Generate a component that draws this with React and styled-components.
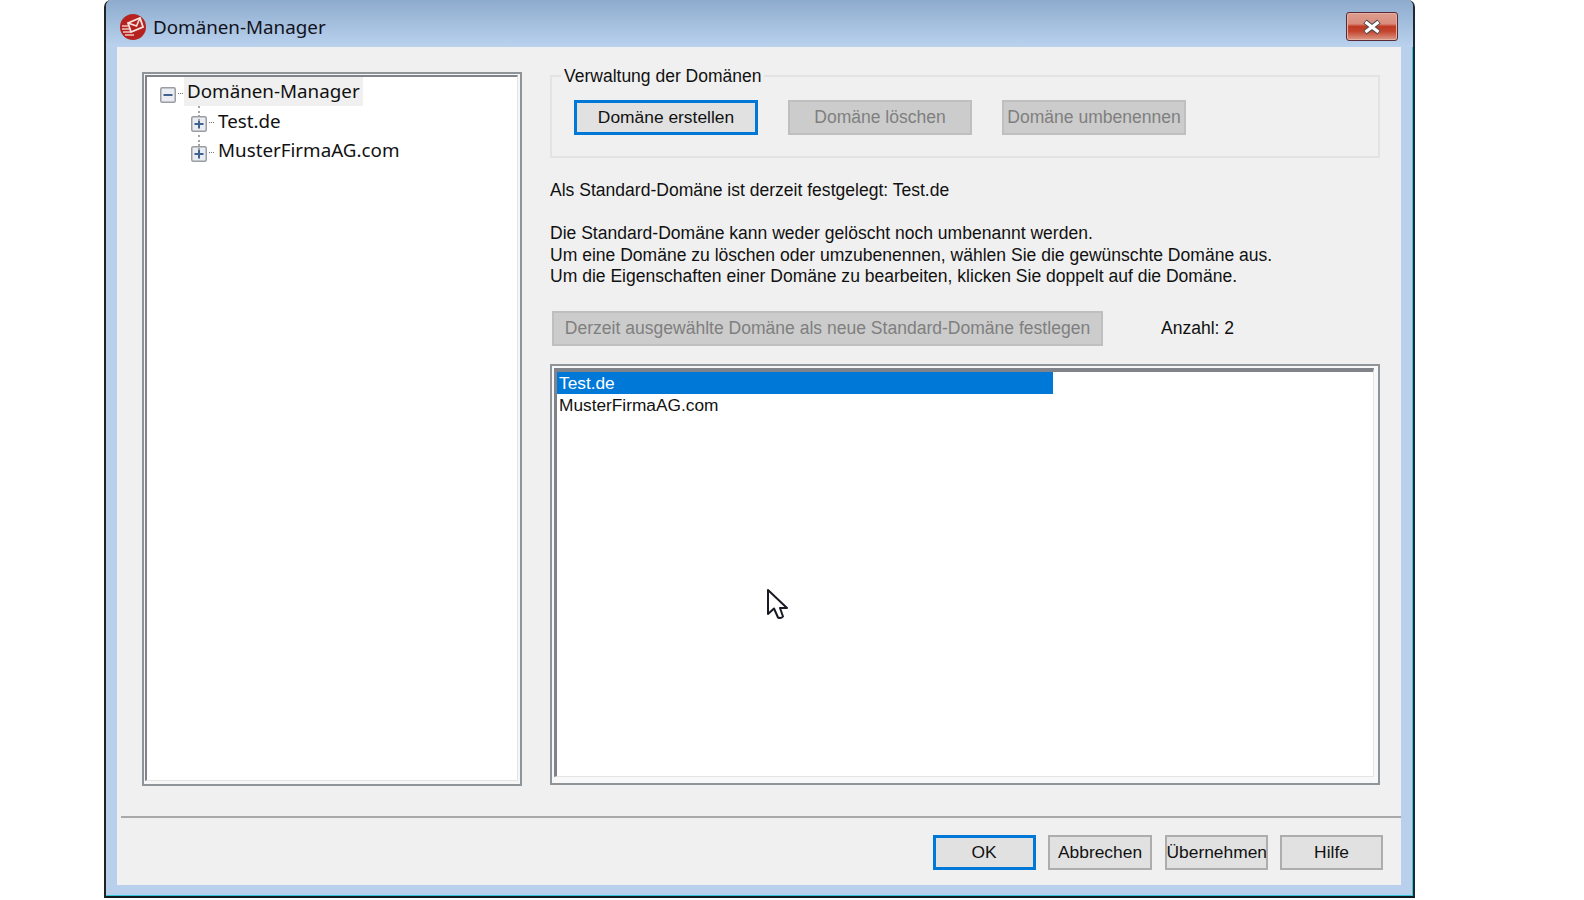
import React from 'react';
import styled, { createGlobalStyle } from 'styled-components';

const GlobalStyle = createGlobalStyle`
  html, body {
    margin: 0;
    padding: 0;
    height: 100%;
    background: #fff;
  }
  body {
    font-family: 'Liberation Sans', Arial, sans-serif;
    font-size: 18px;
    color: #111;
    overflow: hidden;
  }
`;

const Desktop = styled.div`
  position: relative;
  width: 1584px;
  height: 900px;
  padding-left: 104px;
  box-sizing: border-box;
`;

const DialogWindow = styled.div`
  width: 1311px;
  height: 898px;
  box-sizing: border-box;
  display: flex;
  flex-direction: column;
  background: #b8d0ec;
  border-left: 2px solid #222;
  border-right: 2px solid #1d2a30;
  border-bottom: 2px solid #101c22;
  border-radius: 7px 7px 0 0;
  box-shadow: inset -1px -1px 0 #35c4d8;
`;

const TitleBar = styled.div`
  height: 47px;
  box-sizing: border-box;
  flex: none;
  display: flex;
  align-items: center;
  padding: 6px 15px 0 13px;
  border-radius: 6px 6px 0 0;
  background: linear-gradient(#8dabcd, #bad2ee);
`;

const TitleText = styled.span`
  margin-left: 6px;
  font-family: 'Noto Sans', sans-serif;
  font-size: 18.8px;
  color: #12121c;
  flex: 1;
`;

const CloseButton = styled.div`
  width: 52px;
  height: 29px;
  box-sizing: border-box;
  display: flex;
  align-items: center;
  justify-content: center;
  border: 1px solid #5b2a38;
  border-radius: 3px;
  box-shadow: inset 0 0 0 1px #e8b0a0;
  background: linear-gradient(#dd9d8e 0%, #d98c7c 40%, #c03a24 50%, #c4452e 68%, #dc9a8a 100%);
`;

const ClientArea = styled.div`
  flex: 1;
  margin: 0 12px 11px 11px;
  display: flex;
  flex-direction: column;
  background: #f0f0f0;
`;

const Body = styled.div`
  height: 769px;
  box-sizing: border-box;
  display: flex;
  padding: 25px 21px 0 25px;
  gap: 28px;
`;

const TreePanel = styled.div`
  width: 380px;
  height: 714px;
  box-sizing: border-box;
  border: 2px solid #8f9498;
  background: #f6f6f6;
  padding: 1px 2px 3px 1px;
  display: flex;
`;

const TreeInner = styled.div`
  flex: 1;
  box-sizing: border-box;
  background: #fff;
  border-top: 2px solid #80848a;
  border-left: 2px solid #80848a;
  border-right: 1px solid #e4e4e4;
  border-bottom: 1px solid #e4e4e4;
  padding: 0 0 0 13px;
`;

const TreeRow = styled.div`
  position: relative;
  height: 29.5px;
  display: flex;
  align-items: center;
  padding-left: ${p => (p.$child ? '31px' : '0')};
  font-family: 'Noto Sans', sans-serif;
  font-size: 18.8px;
  color: #111;

  ${p => p.$child && `
    &::before {
      content: '';
      position: absolute;
      left: 38px;
      top: -1px;
      height: 15px;
      border-left: 2px dotted #a4a4a4;
    }
  `}
`;

const Connector = styled.span`
  width: 5px;
  margin: 3px 2px 0 2px;
  border-top: 1px dotted #777;
  flex: none;
`;

const TreeLabel = styled.span`
  padding: 2px 3px;
  line-height: 25px;
  margin-left: -1px;
  background: ${p => (p.$active ? '#f0f0f0' : 'transparent')};
`;

const RightColumn = styled.div`
  flex: 1;
  display: flex;
  flex-direction: column;
  min-width: 0;
`;

const GroupBox = styled.fieldset`
  margin: -6px 0 0 0;
  padding: 0;
  height: 92px;
  box-sizing: border-box;
  border: 2px solid #e3e3e3;
  min-inline-size: 0;
`;

const GroupLegend = styled.legend`
  margin-left: 9px;
  padding: 0 3px;
  font-size: 17.5px;
  line-height: 20px;
`;

const ButtonRow = styled.div`
  display: flex;
  gap: 30px;
  padding: 14px 0 0 22px;
`;

const PushButton = styled.button`
  width: ${p => p.$width || '184px'};
  height: ${p => p.$height || '35px'};
  padding: 0;
  box-sizing: border-box;
  flex: none;
  overflow: hidden;
  white-space: nowrap;
  font-family: inherit;
  font-size: ${p => (p.disabled ? '17.55px' : '17.4px')};
  color: ${p => (p.disabled ? '#7f7f7f' : '#111')};
  background: ${p => (p.disabled ? '#cccccc' : '#e1e1e1')};
  border: ${p => (p.$primary ? '3px solid #0078d7' : p.disabled ? '2px solid #bfbfbf' : '2px solid #adadad')};
`;

const InfoLine = styled.div`
  margin-top: 21px;
  font-size: 17.55px;
  line-height: 22px;
`;

const InfoBlock = styled.div`
  margin-top: 22px;
  font-size: 17.55px;
  line-height: 21.5px;
`;

const DefaultRow = styled.div`
  display: flex;
  align-items: center;
  margin-top: 23px;
  padding-left: 2px;
`;

const CountLabel = styled.span`
  margin-left: 58px;
  font-size: 17.55px;
`;

const ListPanel = styled.div`
  margin-top: 18px;
  width: 830px;
  height: 421px;
  box-sizing: border-box;
  border: 2px solid #8f9498;
  background: #f8f8f8;
  padding: 2px 4px 6px 2px;
  display: flex;
`;

const ListInner = styled.div`
  flex: 1;
  box-sizing: border-box;
  background: #fff;
  border-top: 4px solid #80848a;
  border-left: 3px solid #80848a;
  border-right: 1px solid #e4e4e4;
  border-bottom: 1px solid #e4e4e4;
`;

const ListItem = styled.div`
  width: 496px;
  height: 22px;
  padding-left: 2px;
  box-sizing: border-box;
  font-size: 17.3px;
  line-height: 22px;
  color: ${p => (p.$selected ? '#fff' : '#111')};
  background: ${p => (p.$selected ? '#0078d7' : 'transparent')};
`;

const Separator = styled.div`
  height: 2px;
  margin: 0 0 0 4px;
  background: #a9a9a9;
`;

const Footer = styled.div`
  flex: 1;
  display: flex;
  justify-content: flex-end;
  align-items: flex-start;
  gap: 12.5px;
  padding: 17px 18px 0 0;
`;

const CursorIcon = styled.svg`
  position: absolute;
  left: 766px;
  top: 588px;
`;

const AppIcon = () => (
  <svg width="28" height="28" viewBox="0 0 28 28">
    <circle cx="14" cy="14" r="13" fill="#b5221f" />
    <path d="M9 10 L21 5 L24 14 L12 19 Z" fill="none" stroke="#f6e4e0" strokeWidth="1.8" />
    <path d="M9 10 L17.5 13 L21 5" fill="none" stroke="#f6e4e0" strokeWidth="1.6" />
    <path d="M3 13h6M3 16h7M4 19h7M6 22h9" stroke="#f0c8c0" strokeWidth="1.4" />
  </svg>
);

const CloseGlyph = () => (
  <svg width="22" height="16" viewBox="0 0 22 16">
    <path d="M4 2.5 L18 13.5 M18 2.5 L4 13.5" stroke="#4c4a50" strokeWidth="5.4" />
    <path d="M4.5 3 L17.5 13 M17.5 3 L4.5 13" stroke="#fff" strokeWidth="3.2" />
  </svg>
);

const Expander = ({ open }) => (
  <svg width="16" height="16" viewBox="0 0 16 16" style={{ flex: 'none', marginTop: 6 }}>
    <rect x="0.75" y="0.75" width="14.5" height="14.5" rx="1.5" fill="#e9edf2" stroke="#9a9ea3" strokeWidth="1.5" />
    <path d={open ? 'M3.5 8h9' : 'M3.5 8h9M8 3.5v9'} stroke="#41618f" strokeWidth="2" />
  </svg>
);

export default function App() {
  return (
    <>
      <GlobalStyle />
      <Desktop>
        <DialogWindow>
          <TitleBar>
            <AppIcon />
            <TitleText>Domänen-Manager</TitleText>
            <CloseButton><CloseGlyph /></CloseButton>
          </TitleBar>
          <ClientArea>
            <Body>
              <TreePanel>
                <TreeInner>
                  <TreeRow>
                    <Expander open />
                    <Connector />
                    <TreeLabel $active>Domänen-Manager</TreeLabel>
                  </TreeRow>
                  <TreeRow $child>
                    <Expander />
                    <Connector />
                    <TreeLabel>Test.de</TreeLabel>
                  </TreeRow>
                  <TreeRow $child>
                    <Expander />
                    <Connector />
                    <TreeLabel>MusterFirmaAG.com</TreeLabel>
                  </TreeRow>
                </TreeInner>
              </TreePanel>
              <RightColumn>
                <GroupBox>
                  <GroupLegend>Verwaltung der Domänen</GroupLegend>
                  <ButtonRow>
                    <PushButton $primary>Domäne erstellen</PushButton>
                    <PushButton disabled>Domäne löschen</PushButton>
                    <PushButton disabled>Domäne umbenennen</PushButton>
                  </ButtonRow>
                </GroupBox>
                <InfoLine>Als Standard-Domäne ist derzeit festgelegt: Test.de</InfoLine>
                <InfoBlock>
                  Die Standard-Domäne kann weder gelöscht noch umbenannt werden.<br />
                  Um eine Domäne zu löschen oder umzubenennen, wählen Sie die gewünschte Domäne aus.<br />
                  Um die Eigenschaften einer Domäne zu bearbeiten, klicken Sie doppelt auf die Domäne.
                </InfoBlock>
                <DefaultRow>
                  <PushButton disabled $width="551px">Derzeit ausgewählte Domäne als neue Standard-Domäne festlegen</PushButton>
                  <CountLabel>Anzahl: 2</CountLabel>
                </DefaultRow>
                <ListPanel>
                  <ListInner>
                    <ListItem $selected>Test.de</ListItem>
                    <ListItem>MusterFirmaAG.com</ListItem>
                  </ListInner>
                </ListPanel>
              </RightColumn>
            </Body>
            <Separator />
            <Footer>
              <PushButton $primary $width="103px">OK</PushButton>
              <PushButton $width="104px">Abbrechen</PushButton>
              <PushButton $width="103px">Übernehmen</PushButton>
              <PushButton $width="103px">Hilfe</PushButton>
            </Footer>
          </ClientArea>
        </DialogWindow>
        <CursorIcon width="22" height="34" viewBox="0 0 22 34">
          <path d="M2 2 L2 26 L8 20.5 L12 29.5 Q15 31 17 28.5 L14 20 L21 20 Z" fill="#fff" stroke="#1a1a24" strokeWidth="2" strokeLinejoin="round" />
        </CursorIcon>
      </Desktop>
    </>
  );
}
